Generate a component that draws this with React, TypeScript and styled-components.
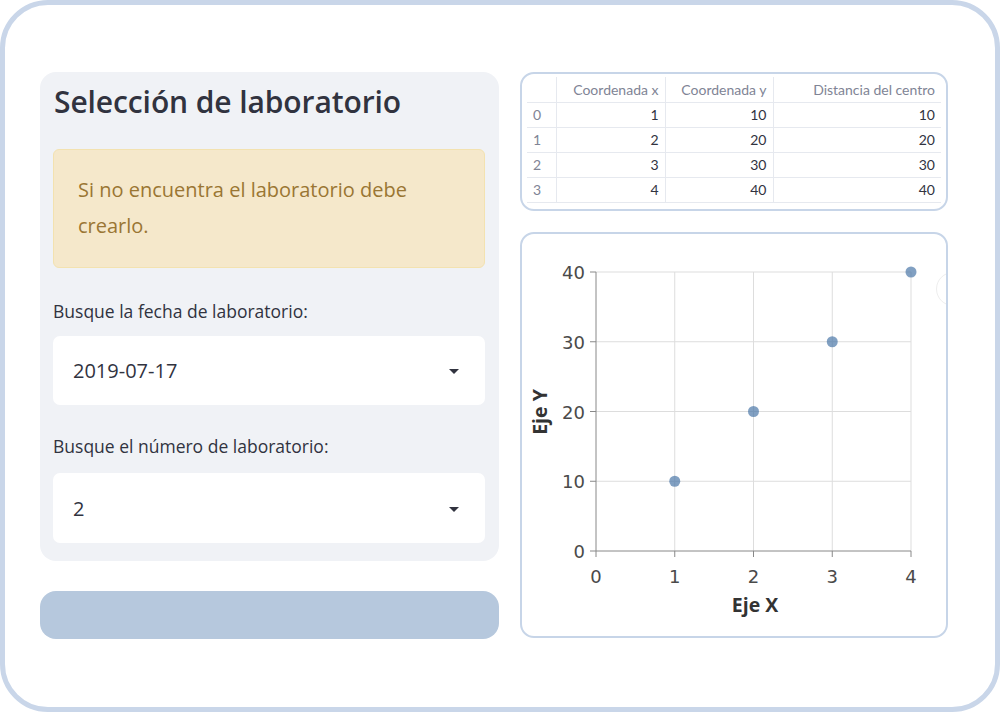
import React from "react";
import styled, { createGlobalStyle } from "styled-components";

const Global = createGlobalStyle`
  html, body { margin: 0; padding: 0; background: #ffffff; }
  body { font-family: "Open Sans", "Lato", sans-serif; color: #31333f; }
  * { box-sizing: border-box; }
`;

const Frame = styled.div`
  width: 1000px;
  height: 712px;
  border: 5px solid #c9d6e9;
  border-radius: 48px;
  background: #ffffff;
  padding: 67px 0 0 35px;
  display: grid;
  grid-template-columns: 459px 428px;
  column-gap: 21px;
  align-items: start;
`;

const Column = styled.div<{ $gap: number }>`
  display: flex;
  flex-direction: column;
  gap: ${(p) => p.$gap}px;
`;

const Panel = styled.section`
  background: #f0f2f6;
  border-radius: 16px;
  padding: 12px 14px 18px 13px;
  height: 489px;
  display: flex;
  flex-direction: column;
`;

const Title = styled.h2`
  margin: 0 0 0 1px;
  font-size: 30px;
  line-height: 36px;
  font-weight: 600;
  color: #31333f;
  letter-spacing: -0.1px;
`;

const Warning = styled.div`
  margin-top: 29px;
  height: 119px;
  background: #f5e8cb;
  border: 1px solid #f3e2b0;
  border-radius: 6px;
  padding: 22px 24px;
  font-size: 20px;
  line-height: 36px;
  color: #9a7633;
`;

const Label = styled.div<{ $top: number }>`
  margin-top: ${(p) => p.$top}px;
  font-size: 17.5px;
  line-height: 24px;
  color: #31333f;
`;

const Select = styled.div<{ $top: number }>`
  margin-top: ${(p) => p.$top}px;
  height: 70px;
  background: #ffffff;
  border-radius: 7px;
  display: flex;
  align-items: center;
  justify-content: space-between;
  padding: 0 26px 0 20px;
  font-size: 20px;
  color: #31333f;
`;

const Caret = styled.span`
  width: 0;
  height: 0;
  border-left: 5px solid transparent;
  border-right: 5px solid transparent;
  border-top: 5px solid #31333f;
  margin-top: 2px;
`;

const WideButton = styled.button`
  height: 48px;
  border: none;
  border-radius: 16px;
  background: #b6c8dd;
  cursor: pointer;
`;

const Card = styled.div<{ $h: number }>`
  position: relative;
  height: ${(p) => p.$h}px;
  border: 2px solid #c7d5e8;
  border-radius: 14px;
  background: #ffffff;
  overflow: hidden;
`;

const TableWrap = styled.div`
  padding: 3px 5px 0 5px;
`;

const Table = styled.table`
  width: 414px;
  border-collapse: collapse;
  font-family: "Lato", "Open Sans", sans-serif;
  font-size: 14px;
  table-layout: fixed;
`;

const Th = styled.th<{ $w: number }>`
  width: ${(p) => p.$w}px;
  height: 25px;
  font-weight: 400;
  color: #808495;
  text-align: right;
  padding: 0 6px;
  border: 1px solid #e6e9ef;
  border-top: none;
  white-space: nowrap;
  &:first-child { border-left: none; }
  &:last-child { border-right: none; }
`;

const Td = styled.td<{ $index?: boolean }>`
  height: 25px;
  padding: 0 6px;
  text-align: ${(p) => (p.$index ? "left" : "right")};
  color: ${(p) => (p.$index ? "#808495" : "#31333f")};
  border: 1px solid #e6e9ef;
  &:first-child { border-left: none; }
  &:last-child { border-right: none; }
`;

const ChartSvg = styled.svg`
  display: block;
`;

const MenuGhost = styled.div`
  position: absolute;
  right: -24px;
  top: 38px;
  width: 34px;
  height: 34px;
  border-radius: 50%;
  border: 1px solid #eeeeee;
`;

const rows = [
  [0, 1, 10, 10],
  [1, 2, 20, 20],
  [2, 3, 30, 30],
  [3, 4, 40, 40],
];

const X0 = 596;
const XS = 78.75;
const Y0 = 551;
const YS = 6.975;
const px = (v: number) => X0 + v * XS;
const py = (v: number) => Y0 - v * YS;

function Chart() {
  const xt = [0, 1, 2, 3, 4];
  const yt = [0, 10, 20, 30, 40];
  return (
    <ChartSvg width={424} height={402} viewBox="522 234 424 402">
      {xt.slice(1).map((t) => (
        <line key={"gx" + t} x1={px(t)} x2={px(t)} y1={py(40)} y2={Y0} stroke="#dddddd" strokeWidth={1} />
      ))}
      {yt.slice(1).map((t) => (
        <line key={"gy" + t} x1={X0} x2={px(4)} y1={py(t)} y2={py(t)} stroke="#dddddd" strokeWidth={1} />
      ))}
      <line x1={X0} x2={X0} y1={py(40)} y2={Y0} stroke="#888888" strokeWidth={1} />
      <line x1={X0} x2={px(4)} y1={Y0} y2={Y0} stroke="#888888" strokeWidth={1} />
      {xt.map((t) => (
        <g key={"tx" + t}>
          <line x1={px(t)} x2={px(t)} y1={Y0} y2={Y0 + 6} stroke="#888888" strokeWidth={1} />
          <text x={px(t)} y={Y0 + 32} textAnchor="middle" fontFamily="DejaVu Sans, sans-serif" fontSize={18} fill="#4a4a4a">
            {t}
          </text>
        </g>
      ))}
      {yt.map((t) => (
        <g key={"ty" + t}>
          <line x1={X0 - 6} x2={X0} y1={py(t)} y2={py(t)} stroke="#888888" strokeWidth={1} />
          <text x={X0 - 11} y={py(t) + 7} textAnchor="end" fontFamily="DejaVu Sans, sans-serif" fontSize={18} fill="#4a4a4a">
            {t}
          </text>
        </g>
      ))}
      <text x={755} y={612} textAnchor="middle" fontFamily="Open Sans, sans-serif" fontWeight={700} fontSize={19.5} fill="#333333">
        Eje X
      </text>
      <text
        x={0}
        y={0}
        transform={`translate(547 412) rotate(-90)`}
        textAnchor="middle"
        fontFamily="Open Sans, sans-serif"
        fontWeight={700}
        fontSize={19.5}
        fill="#333333"
      >
        Eje Y
      </text>
      {[1, 2, 3, 4].map((v) => (
        <circle key={"p" + v} cx={px(v)} cy={py(v * 10)} r={5.5} fill="#4c78a8" fillOpacity={0.7} />
      ))}
    </ChartSvg>
  );
}

export default function App() {
  return (
    <>
      <Global />
      <Frame>
        <Column $gap={30}>
          <Panel>
            <Title>Selección de laboratorio</Title>
            <Warning>Si no encuentra el laboratorio debe crearlo.</Warning>
            <Label $top={31}>Busque la fecha de laboratorio:</Label>
            <Select $top={13}>
              <span>2019-07-17</span>
              <Caret />
            </Select>
            <Label $top={29}>Busque el número de laboratorio:</Label>
            <Select $top={15}>
              <span>2</span>
              <Caret />
            </Select>
          </Panel>
          <WideButton aria-label="acción" />
        </Column>
        <Column $gap={21}>
          <Card $h={139}>
            <TableWrap>
              <Table>
                <thead>
                  <tr>
                    <Th $w={29}></Th>
                    <Th $w={109}>Coordenada x</Th>
                    <Th $w={108}>Coordenada y</Th>
                    <Th $w={168}>Distancia del centro</Th>
                  </tr>
                </thead>
                <tbody>
                  {rows.map((r) => (
                    <tr key={r[0]}>
                      <Td $index>{r[0]}</Td>
                      <Td>{r[1]}</Td>
                      <Td>{r[2]}</Td>
                      <Td>{r[3]}</Td>
                    </tr>
                  ))}
                </tbody>
              </Table>
            </TableWrap>
          </Card>
          <Card $h={406}>
            <Chart />
            <MenuGhost />
          </Card>
        </Column>
      </Frame>
    </>
  );
}
